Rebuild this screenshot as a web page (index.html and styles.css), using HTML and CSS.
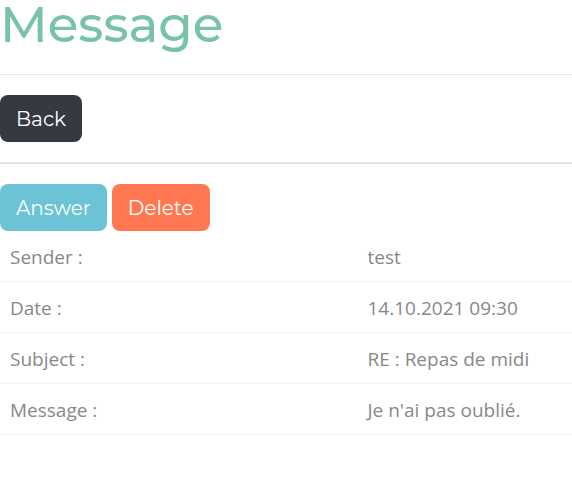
FILE: index.html
```html
<!DOCTYPE html>
<html lang="en">
<head>
<meta charset="utf-8">
<meta name="viewport" content="width=device-width, initial-scale=1">
<title>Message</title>
<link rel="stylesheet" href="styles.css">
</head>
<body>
<main>
  <h1 class="title">Message</h1>
  <nav class="toolbar">
    <button type="button" class="btn btn-dark">Back</button>
  </nav>
  <div class="actions">
    <button type="button" class="btn btn-info">Answer</button>
    <button type="button" class="btn btn-danger">Delete</button>
  </div>
  <table class="details">
    <tbody>
      <tr><th scope="row">Sender :</th><td>test</td></tr>
      <tr><th scope="row">Date :</th><td>14.10.2021 09:30</td></tr>
      <tr><th scope="row">Subject :</th><td>RE : Repas de midi</td></tr>
      <tr><th scope="row">Message :</th><td>Je n'ai pas oublié.</td></tr>
    </tbody>
  </table>
</main>
</body>
</html>
```
FILE: styles.css
```css
* {
  box-sizing: border-box;
}

body {
  margin: 0;
  background: #fff;
  color: #888;
  font-family: "Segoe UI", "Open Sans", "Noto Sans", sans-serif;
  font-size: 19px;
}

.title {
  margin: 0;
  padding-bottom: 24px;
  border-bottom: 1px solid #e6e6e6;
  color: #78c2ad;
  font-family: Montserrat, Inter, sans-serif;
  font-size: 50px;
  font-weight: 500;
  line-height: 50px;
}

.toolbar {
  padding: 20px 0;
  border-bottom: 2px solid #e3e3e3;
}

.actions {
  display: flex;
  gap: 5px;
  padding-top: 20px;
}

.btn {
  height: 47px;
  padding: 0 16px;
  border: 0;
  border-radius: 8px;
  color: #fff;
  font-family: Montserrat, Inter, sans-serif;
  font-size: 20px;
  cursor: pointer;
}

.btn-dark {
  background: #343a40;
}

.btn-info {
  background: #6cc3d5;
}

.btn-danger {
  background: #ff7851;
}

.details {
  width: 100%;
  border-collapse: separate;
  border-spacing: 0;
  table-layout: fixed;
}

.details th,
.details td {
  height: 51px;
  padding: 2px 10px 0;
  border-bottom: 1px solid #f0f0f0;
  font-weight: 400;
  text-align: left;
}

.details th {
  width: 62.5%;
}
```
